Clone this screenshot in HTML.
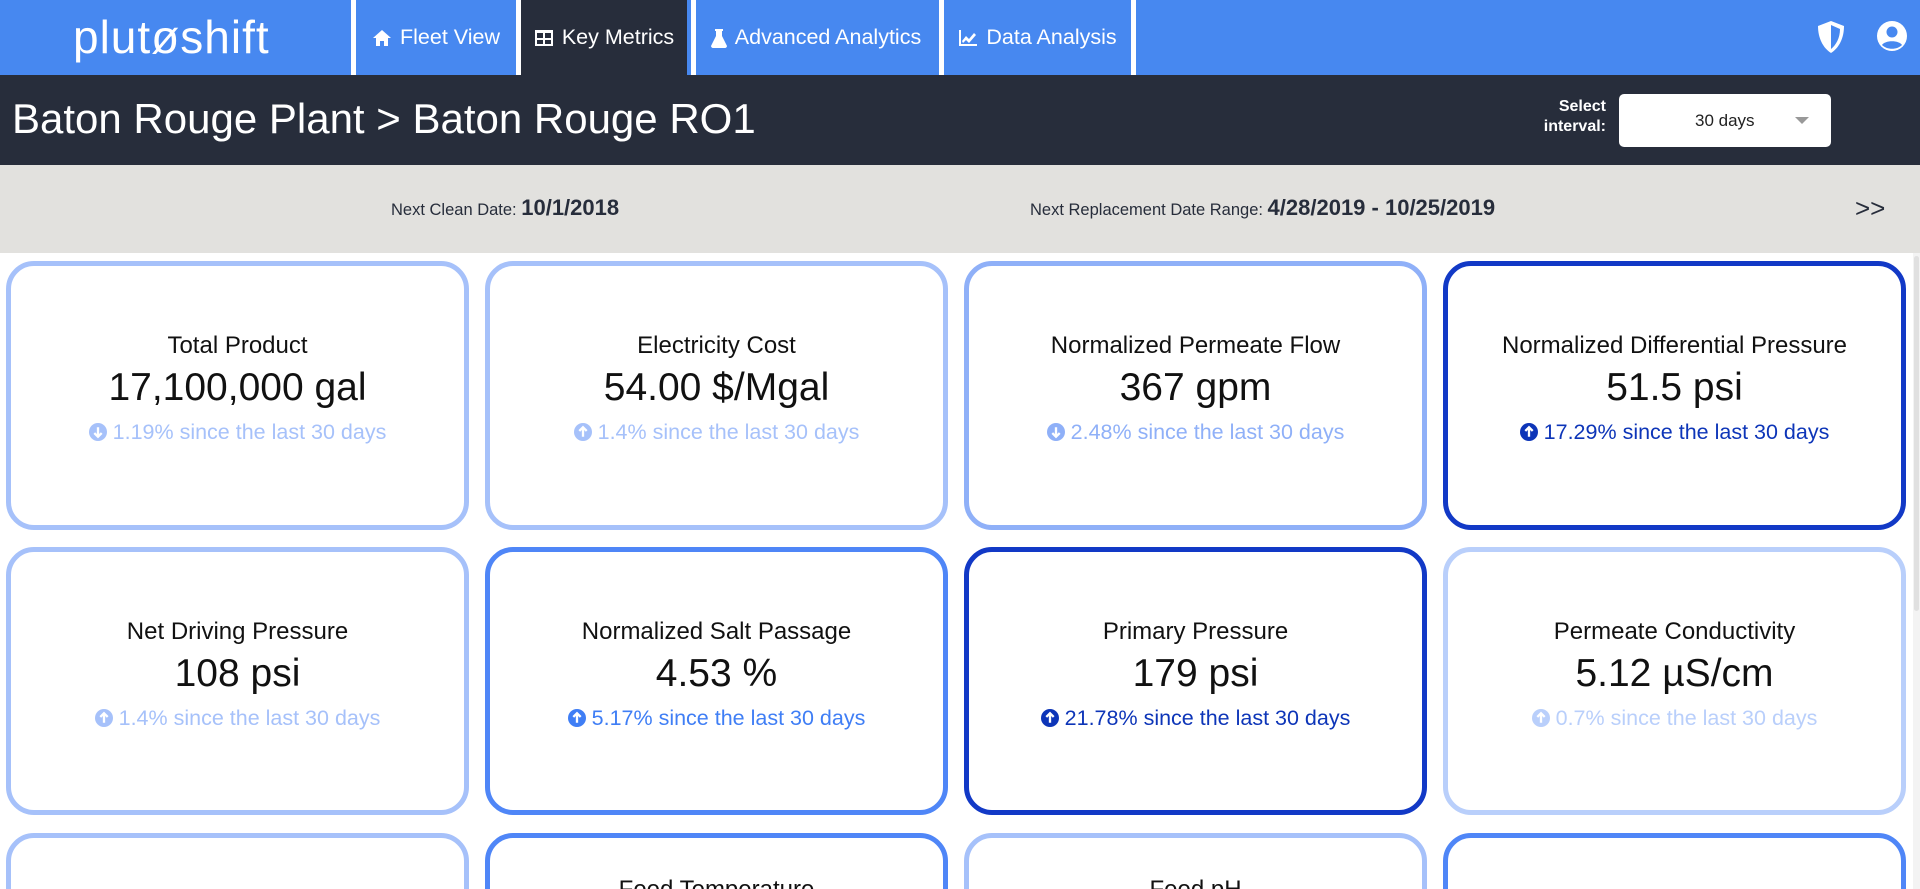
<!DOCTYPE html>
<html><head><meta charset="utf-8"><style>
*{box-sizing:border-box;margin:0;padding:0}
html,body{width:1920px;height:889px;overflow:hidden}
body{background:#fff;font-family:"Liberation Sans",sans-serif;position:relative}
.nav{position:absolute;left:0;top:0;width:1920px;height:75px;background:#4788f0}
.logo{position:absolute;left:73px;top:10px;color:#fff;font-size:46px;letter-spacing:1px}
.sep{position:absolute;top:0;width:5px;height:75px;background:#fff}
.tab{position:absolute;top:0;height:75px;color:#fff;font-size:21.5px;display:flex;align-items:center;justify-content:center;gap:8px}
.tab svg{fill:#fff}
.hdr{position:absolute;left:0;top:75px;width:1920px;height:90px;background:#272d3b}
.title{position:absolute;left:12px;top:20px;color:#fff;font-size:42px}
.sl{position:absolute;left:1530px;top:22px;width:76px;color:#fff;font-size:16px;text-align:right;line-height:20px;font-weight:bold}
.sel{position:absolute;left:1619px;top:19px;width:212px;height:53px;background:#fff;border-radius:5px;font-size:17px;color:#222;line-height:53px;padding-left:76px}
.sel:after{content:"";position:absolute;right:22px;top:23px;border-left:7px solid transparent;border-right:7px solid transparent;border-top:7px solid #999}
.band{position:absolute;left:0;top:165px;width:1920px;height:88px;background:#e2e1de;color:#272d3b}
.band span.s{font-size:16.5px}.band span.b{font-size:22px;font-weight:bold}
.card{position:absolute;width:463px;border:5px solid #a6c1fa;border-radius:28px;text-align:center;background:#fff}
.card .t{position:absolute;left:0;right:0;top:66px;font-size:24px;color:#111}
.card .v{position:absolute;left:0;right:0;top:100px;font-size:39px;color:#111}
.card .c{position:absolute;left:0;right:0;top:154px;font-size:21.5px}
.ic{display:inline-block;width:18px;height:18px;border-radius:50%;vertical-align:-2px;margin-right:6px;position:relative}
.ic svg{position:absolute;left:0;top:0}
</style></head><body>
<div class="nav">
<div class="logo">plut<span>ø</span>shift</div>
<div class="sep" style="left:351px"></div>
<div class="tab" style="left:356px;width:160px"><svg width="20" height="18" viewBox="0 0 20 18"><path d="M10 1 1 9h3v8h4v-5h4v5h4V9h3z"/></svg>Fleet View</div>
<div class="sep" style="left:516px"></div>
<div class="tab" style="left:521px;width:166px;background:#272d3b"><svg width="20" height="18" viewBox="0 0 20 18"><path d="M1 1h18v16H1z M3 4v5h6V4z M11 4v5h6V4z M3 11v4h6v-4z M11 11v4h6v-4z" fill-rule="evenodd"/></svg>Key Metrics</div>
<div class="sep" style="left:691px"></div>
<div class="tab" style="left:696px;width:240px"><svg width="16" height="20" viewBox="0 0 16 20"><path d="M4 1h8v2h-1v5l5 10c0 1-1 2-2 2H2c-1 0-2-1-2-2l5-10V3H4z"/></svg>Advanced Analytics</div>
<div class="sep" style="left:939px"></div>
<div class="tab" style="left:944px;width:187px"><svg width="20" height="18" viewBox="0 0 20 18"><path d="M1 1h2v14h16v2H1z M4 12l4-5 3 3 5-6 2 2-7 8-3-3-3 3z"/></svg>Data Analysis</div>
<div class="sep" style="left:1131px"></div>
<svg style="position:absolute;left:1816px;top:20px" width="30" height="34" viewBox="0 0 30 34"><path d="M15 1 28 6c0 12-5 22-13 27C7 28 2 18 2 6z" fill="#fff"/><path d="M15 5 24 9c0 9-4 16-9 20z" fill="#4788f0"/></svg>
<svg style="position:absolute;left:1876px;top:20px" width="32" height="32" viewBox="0 0 32 32"><circle cx="16" cy="16" r="15" fill="#fff"/><circle cx="16" cy="12" r="5.5" fill="#4788f0"/><path d="M6 25c3-5 17-5 20 0-5 5-15 5-20 0z" fill="#4788f0"/></svg>
</div>
<div class="hdr">
<div class="title">Baton Rouge Plant &gt; Baton Rouge RO1</div>
<div class="sl">Select interval:</div>
<div class="sel">30 days</div>
</div>
<div class="band">
<div style="position:absolute;left:391px;top:30px"><span class="s">Next Clean Date: </span><span class="b">10/1/2018</span></div>
<div style="position:absolute;left:1030px;top:30px"><span class="s">Next Replacement Date Range: </span><span class="b">4/28/2019 - 10/25/2019</span></div>
<div style="position:absolute;left:1855px;top:28px;font-size:26px">&gt;&gt;</div>
</div>
<div style="position:absolute;left:1913px;top:253px;width:7px;height:636px;background:#f3f3f3"></div>
<div style="position:absolute;left:1914px;top:256px;width:5px;height:355px;background:#e0e0e0;border-radius:3px"></div>

<div class="card" style="left:6px;top:261px;height:269px"><div class="t">Total Product</div><div class="v">17,100,000 gal</div><div class="c" style="color:#a6c1fa"><span class="ic" style="background:#a6c1fa"><svg width="18" height="18" viewBox="0 0 17 17"><path d="M8.5 4v9M5 9.5l3.5 3.5 3.5-3.5" stroke="#fff" stroke-width="2.2" fill="none"/></svg></span>1.19% since the last 30 days</div></div>
<div class="card" style="left:485px;top:261px;height:269px"><div class="t">Electricity Cost</div><div class="v">54.00 $/Mgal</div><div class="c" style="color:#a6c1fa"><span class="ic" style="background:#a6c1fa"><svg width="18" height="18" viewBox="0 0 17 17"><path d="M8.5 13V4M5 7.5 8.5 4 12 7.5" stroke="#fff" stroke-width="2.2" fill="none"/></svg></span>1.4% since the last 30 days</div></div>
<div class="card" style="left:964px;top:261px;height:269px;border-color:#8fb0f8"><div class="t">Normalized Permeate Flow</div><div class="v">367 gpm</div><div class="c" style="color:#8fb0f8"><span class="ic" style="background:#8fb0f8"><svg width="18" height="18" viewBox="0 0 17 17"><path d="M8.5 4v9M5 9.5l3.5 3.5 3.5-3.5" stroke="#fff" stroke-width="2.2" fill="none"/></svg></span>2.48% since the last 30 days</div></div>
<div class="card" style="left:1443px;top:261px;height:269px;border-color:#1239c6"><div class="t">Normalized Differential Pressure</div><div class="v">51.5 psi</div><div class="c" style="color:#0d35b8"><span class="ic" style="background:#0d35b8"><svg width="18" height="18" viewBox="0 0 17 17"><path d="M8.5 13V4M5 7.5 8.5 4 12 7.5" stroke="#fff" stroke-width="2.2" fill="none"/></svg></span>17.29% since the last 30 days</div></div>

<div class="card" style="left:6px;top:547px;height:268px"><div class="t">Net Driving Pressure</div><div class="v">108 psi</div><div class="c" style="color:#a6c1fa"><span class="ic" style="background:#a6c1fa"><svg width="18" height="18" viewBox="0 0 17 17"><path d="M8.5 13V4M5 7.5 8.5 4 12 7.5" stroke="#fff" stroke-width="2.2" fill="none"/></svg></span>1.4% since the last 30 days</div></div>
<div class="card" style="left:485px;top:547px;height:268px;border-color:#4f86f7"><div class="t">Normalized Salt Passage</div><div class="v">4.53 %</div><div class="c" style="color:#3f7ef5"><span class="ic" style="background:#3f7ef5"><svg width="18" height="18" viewBox="0 0 17 17"><path d="M8.5 13V4M5 7.5 8.5 4 12 7.5" stroke="#fff" stroke-width="2.2" fill="none"/></svg></span>5.17% since the last 30 days</div></div>
<div class="card" style="left:964px;top:547px;height:268px;border-color:#1239c6"><div class="t">Primary Pressure</div><div class="v">179 psi</div><div class="c" style="color:#0d35b8"><span class="ic" style="background:#0d35b8"><svg width="18" height="18" viewBox="0 0 17 17"><path d="M8.5 13V4M5 7.5 8.5 4 12 7.5" stroke="#fff" stroke-width="2.2" fill="none"/></svg></span>21.78% since the last 30 days</div></div>
<div class="card" style="left:1443px;top:547px;height:268px;border-color:#b9cffb"><div class="t">Permeate Conductivity</div><div class="v">5.12 µS/cm</div><div class="c" style="color:#b9cffb"><span class="ic" style="background:#b9cffb"><svg width="18" height="18" viewBox="0 0 17 17"><path d="M8.5 13V4M5 7.5 8.5 4 12 7.5" stroke="#fff" stroke-width="2.2" fill="none"/></svg></span>0.7% since the last 30 days</div></div>

<div class="card" style="left:6px;top:833px;height:268px"></div>
<div class="card" style="left:485px;top:833px;height:268px;border-color:#4f86f7"><div class="t" style="top:38px">Feed Temperature</div></div>
<div class="card" style="left:964px;top:833px;height:268px"><div class="t" style="top:38px">Feed pH</div></div>
<div class="card" style="left:1443px;top:833px;height:268px;border-color:#4f86f7"></div>
</body></html>
